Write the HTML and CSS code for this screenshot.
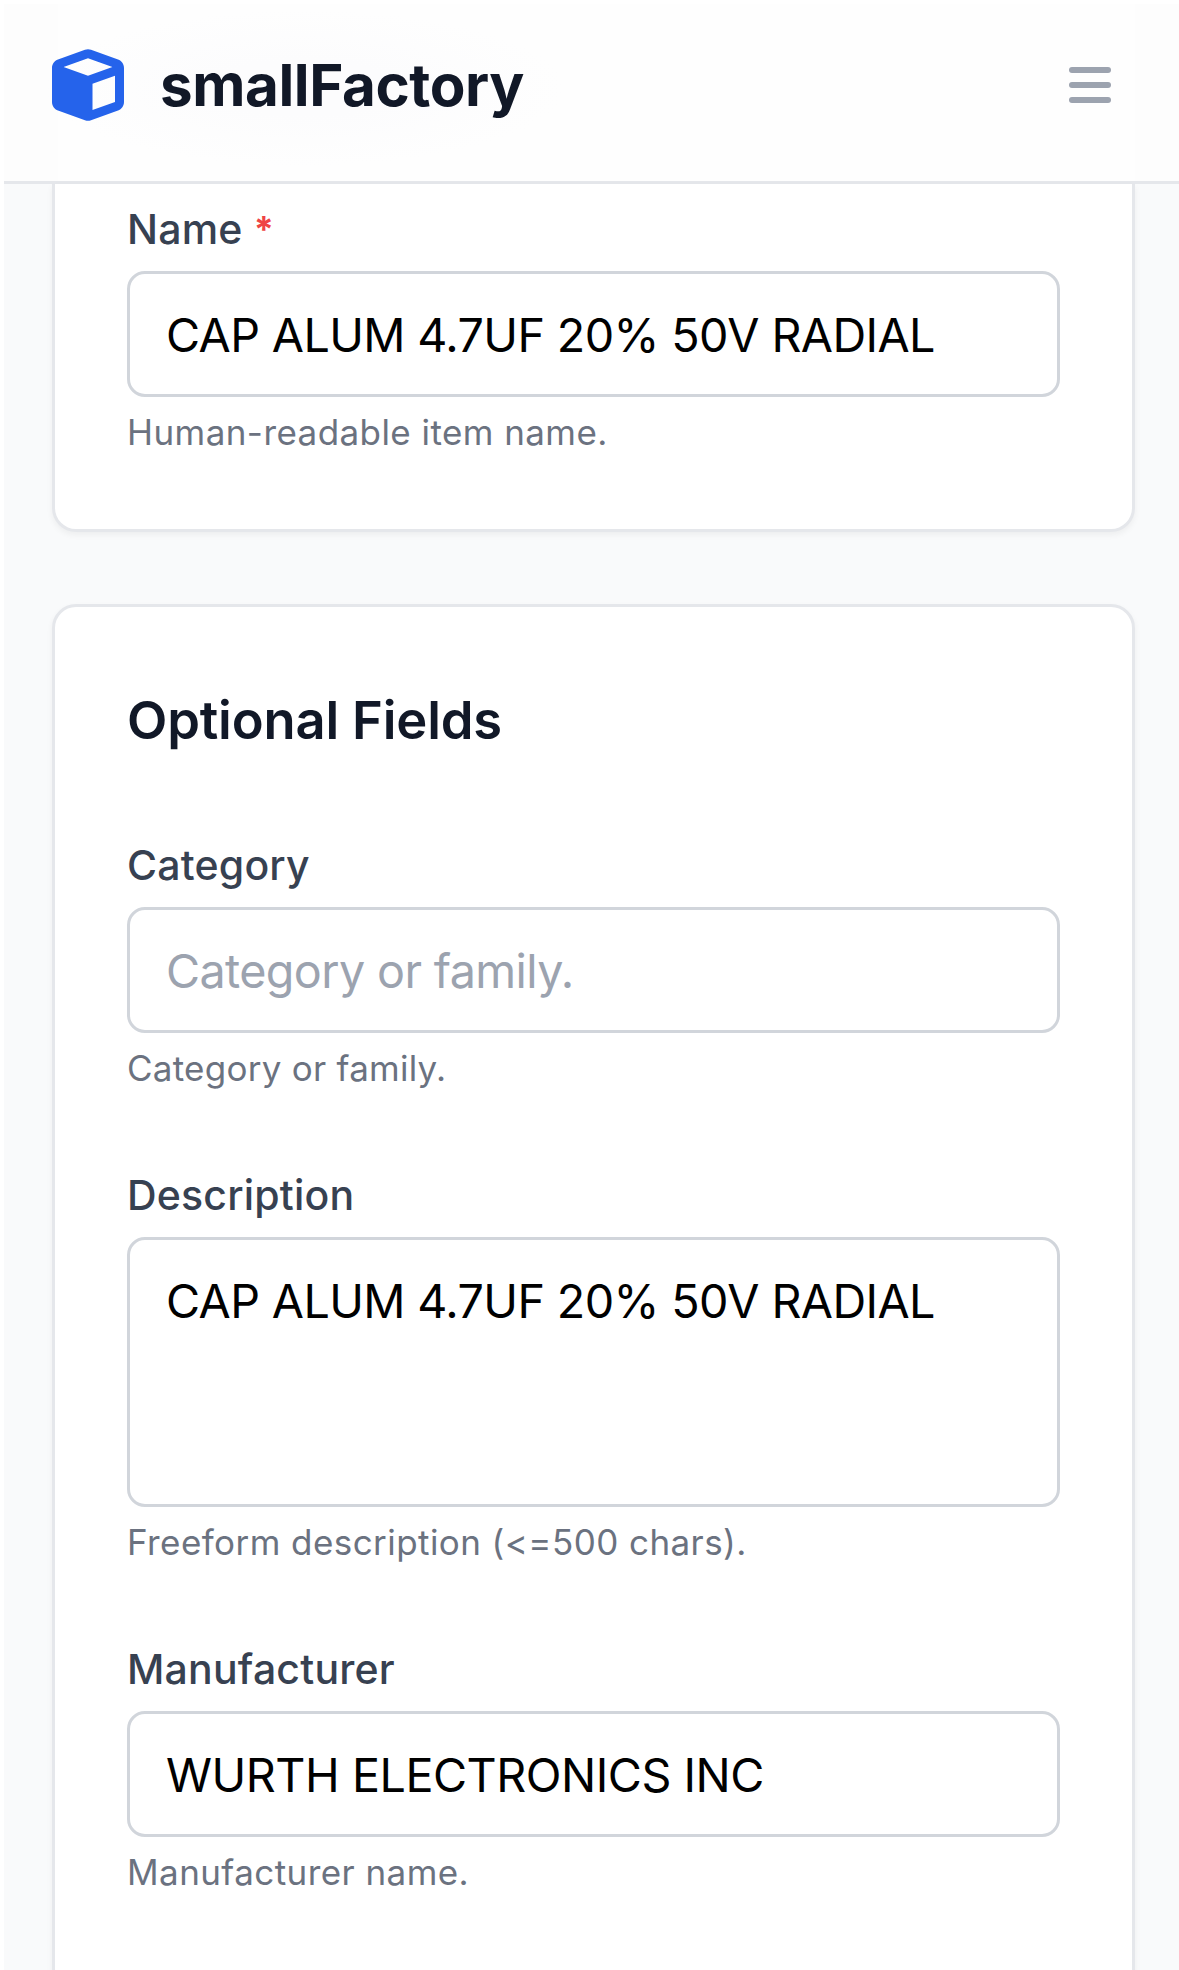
FILE: index.html
```
<!DOCTYPE html>
<html lang="en">
<head>
<meta charset="utf-8">
<title>smallFactory</title>
<link rel="stylesheet" href="styles.css">
</head>
<body>
<div class="page">
  <header class="topbar">
    <a class="brand">
      <svg class="brand-icon" viewBox="0 0 512 512" aria-hidden="true"><path fill="currentColor" d="M234.5 5.7c13.9-5 29.1-5 43.1 0l192 68.6C495 83.4 512 107.5 512 134.6V377.4c0 27-17 51.2-42.5 60.3l-192 68.6c-13.9 5-29.1 5-43.1 0l-192-68.6C17 428.6 0 404.5 0 377.4V134.6c0-27 17-51.2 42.5-60.3l192-68.6zM256 66L82.3 128 256 190l173.7-62L256 66zm32 368.6l160-57.1v-188L288 246.6v188z"/></svg>
      <span class="brand-name">smallFactory</span>
    </a>
    <button class="menu-button" type="button" aria-label="Menu">
      <svg class="menu-icon" viewBox="0 0 42 36" aria-hidden="true">
        <rect width="42" height="6" rx="3"/>
        <rect y="15" width="42" height="6" rx="3"/>
        <rect y="30" width="42" height="6" rx="3"/>
      </svg>
    </button>
  </header>

  <main class="content">
    <section class="card card-continued">
      <div class="field">
        <label class="label" for="name">Name <span class="required">*</span></label>
        <input class="control" id="name" type="text" value="CAP ALUM 4.7UF 20% 50V RADIAL">
        <p class="hint">Human-readable item name.</p>
      </div>
    </section>

    <section class="card card-open">
      <h2 class="card-title">Optional Fields</h2>
      <div class="fields">
        <div class="field">
          <label class="label" for="category">Category</label>
          <input class="control" id="category" type="text" placeholder="Category or family.">
          <p class="hint hint-tight">Category or family.</p>
        </div>
        <div class="field">
          <label class="label" for="description">Description</label>
          <textarea class="control control-area" id="description">CAP ALUM 4.7UF 20% 50V RADIAL</textarea>
          <p class="hint">Freeform description (&lt;=500 chars).</p>
        </div>
        <div class="field">
          <label class="label" for="manufacturer">Manufacturer</label>
          <input class="control control-loose" id="manufacturer" type="text" value="WURTH ELECTRONICS INC">
          <p class="hint">Manufacturer name.</p>
        </div>
      </div>
    </section>
  </main>
</div>
</body>
</html>
```
FILE: styles.css
```
* {
  box-sizing: border-box;
}

html,
body {
  margin: 0;
  height: 1970px;
  overflow: hidden;
  background: #fff;
}

body {
  padding-left: 4px;
  font-family: Inter, "Noto Sans", sans-serif;
}

.page {
  width: 1179px;
  height: 1970px;
  padding-top: 4px;
  overflow: hidden;
  background: linear-gradient(#fff 4px, #f9fafb 4px);
}

.topbar {
  display: flex;
  align-items: center;
  justify-content: space-between;
  height: 180px;
  padding: 0 72px 15px 48px;
  border-bottom: 3px solid #e5e7eb;
  background:
    radial-gradient(ellipse 260px 78px at 300px 84px, #fcfcfd 35%, rgba(252, 252, 253, 0) 100%),
    linear-gradient(90deg, #fdfdfd 54px, #fefefe 54px, #fefefe 1131px, #fdfdfd 1131px);
}

.brand {
  display: flex;
  align-items: center;
  gap: 36px;
}

.brand-icon {
  width: 72px;
  height: 72px;
  color: #2563eb;
}

.brand-name {
  color: #111827;
  font-size: 58.3px;
  font-weight: 700;
  line-height: 84px;
  letter-spacing: -0.415px;
}

.menu-button {
  display: flex;
  padding: 0;
  border: 0;
  background: none;
}

.menu-icon {
  width: 42px;
  height: 36px;
  fill: #9ca3af;
}

.content {
  display: flex;
  flex-direction: column;
  gap: 72px;
  padding: 0 48px;
}

.card {
  padding: 72px;
  border: 3px solid #e5e7eb;
  border-radius: 24px;
  background: #fff;
  box-shadow: 0 3px 6px rgba(0, 0, 0, 0.05);
}

/* Scrolled partly behind the top bar */
.card-continued {
  padding-top: 15px;
  border-top: 0;
  border-radius: 0 0 24px 24px;
}

/* Runs on past the bottom of the viewport */
.card-open {
  height: 1500px;
}

.card-title {
  margin: -1px 0 73px;
  color: #111827;
  font-size: 52.5px;
  font-weight: 600;
  line-height: 84px;
  letter-spacing: -0.174px;
}

.fields {
  display: flex;
  flex-direction: column;
  gap: 72px;
}

.field {
  display: flex;
  flex-direction: column;
}

.label {
  height: 60px;
  margin-bottom: 12px;
  color: #374151;
  font-size: 41px;
  font-weight: 500;
  line-height: 60px;
  letter-spacing: 0.2px;
}

.required {
  color: #ef4444;
  font-size: 36px;
  font-weight: 700;
  line-height: 1;
  vertical-align: 2px;
}

.control {
  display: block;
  width: 100%;
  height: 126px;
  margin: 0;
  padding: 25px 36px 23px;
  border: 3px solid #d1d5db;
  border-radius: 18px;
  outline: 0;
  background: #fff;
  color: #000;
  font-family: inherit;
  font-size: 46.7px;
  line-height: 72px;
  letter-spacing: -0.627px;
  resize: none;
}

.control::placeholder {
  color: #9ca3af;
}

.control-area {
  height: 270px;
  overflow: hidden;
}

.control-loose {
  letter-spacing: -0.479px;
}

.hint {
  margin: 11px 0 1px;
  color: #6b7280;
  font-size: 35px;
  line-height: 48px;
  letter-spacing: 0.43px;
}

.hint-tight {
  letter-spacing: 0.255px;
}
```
